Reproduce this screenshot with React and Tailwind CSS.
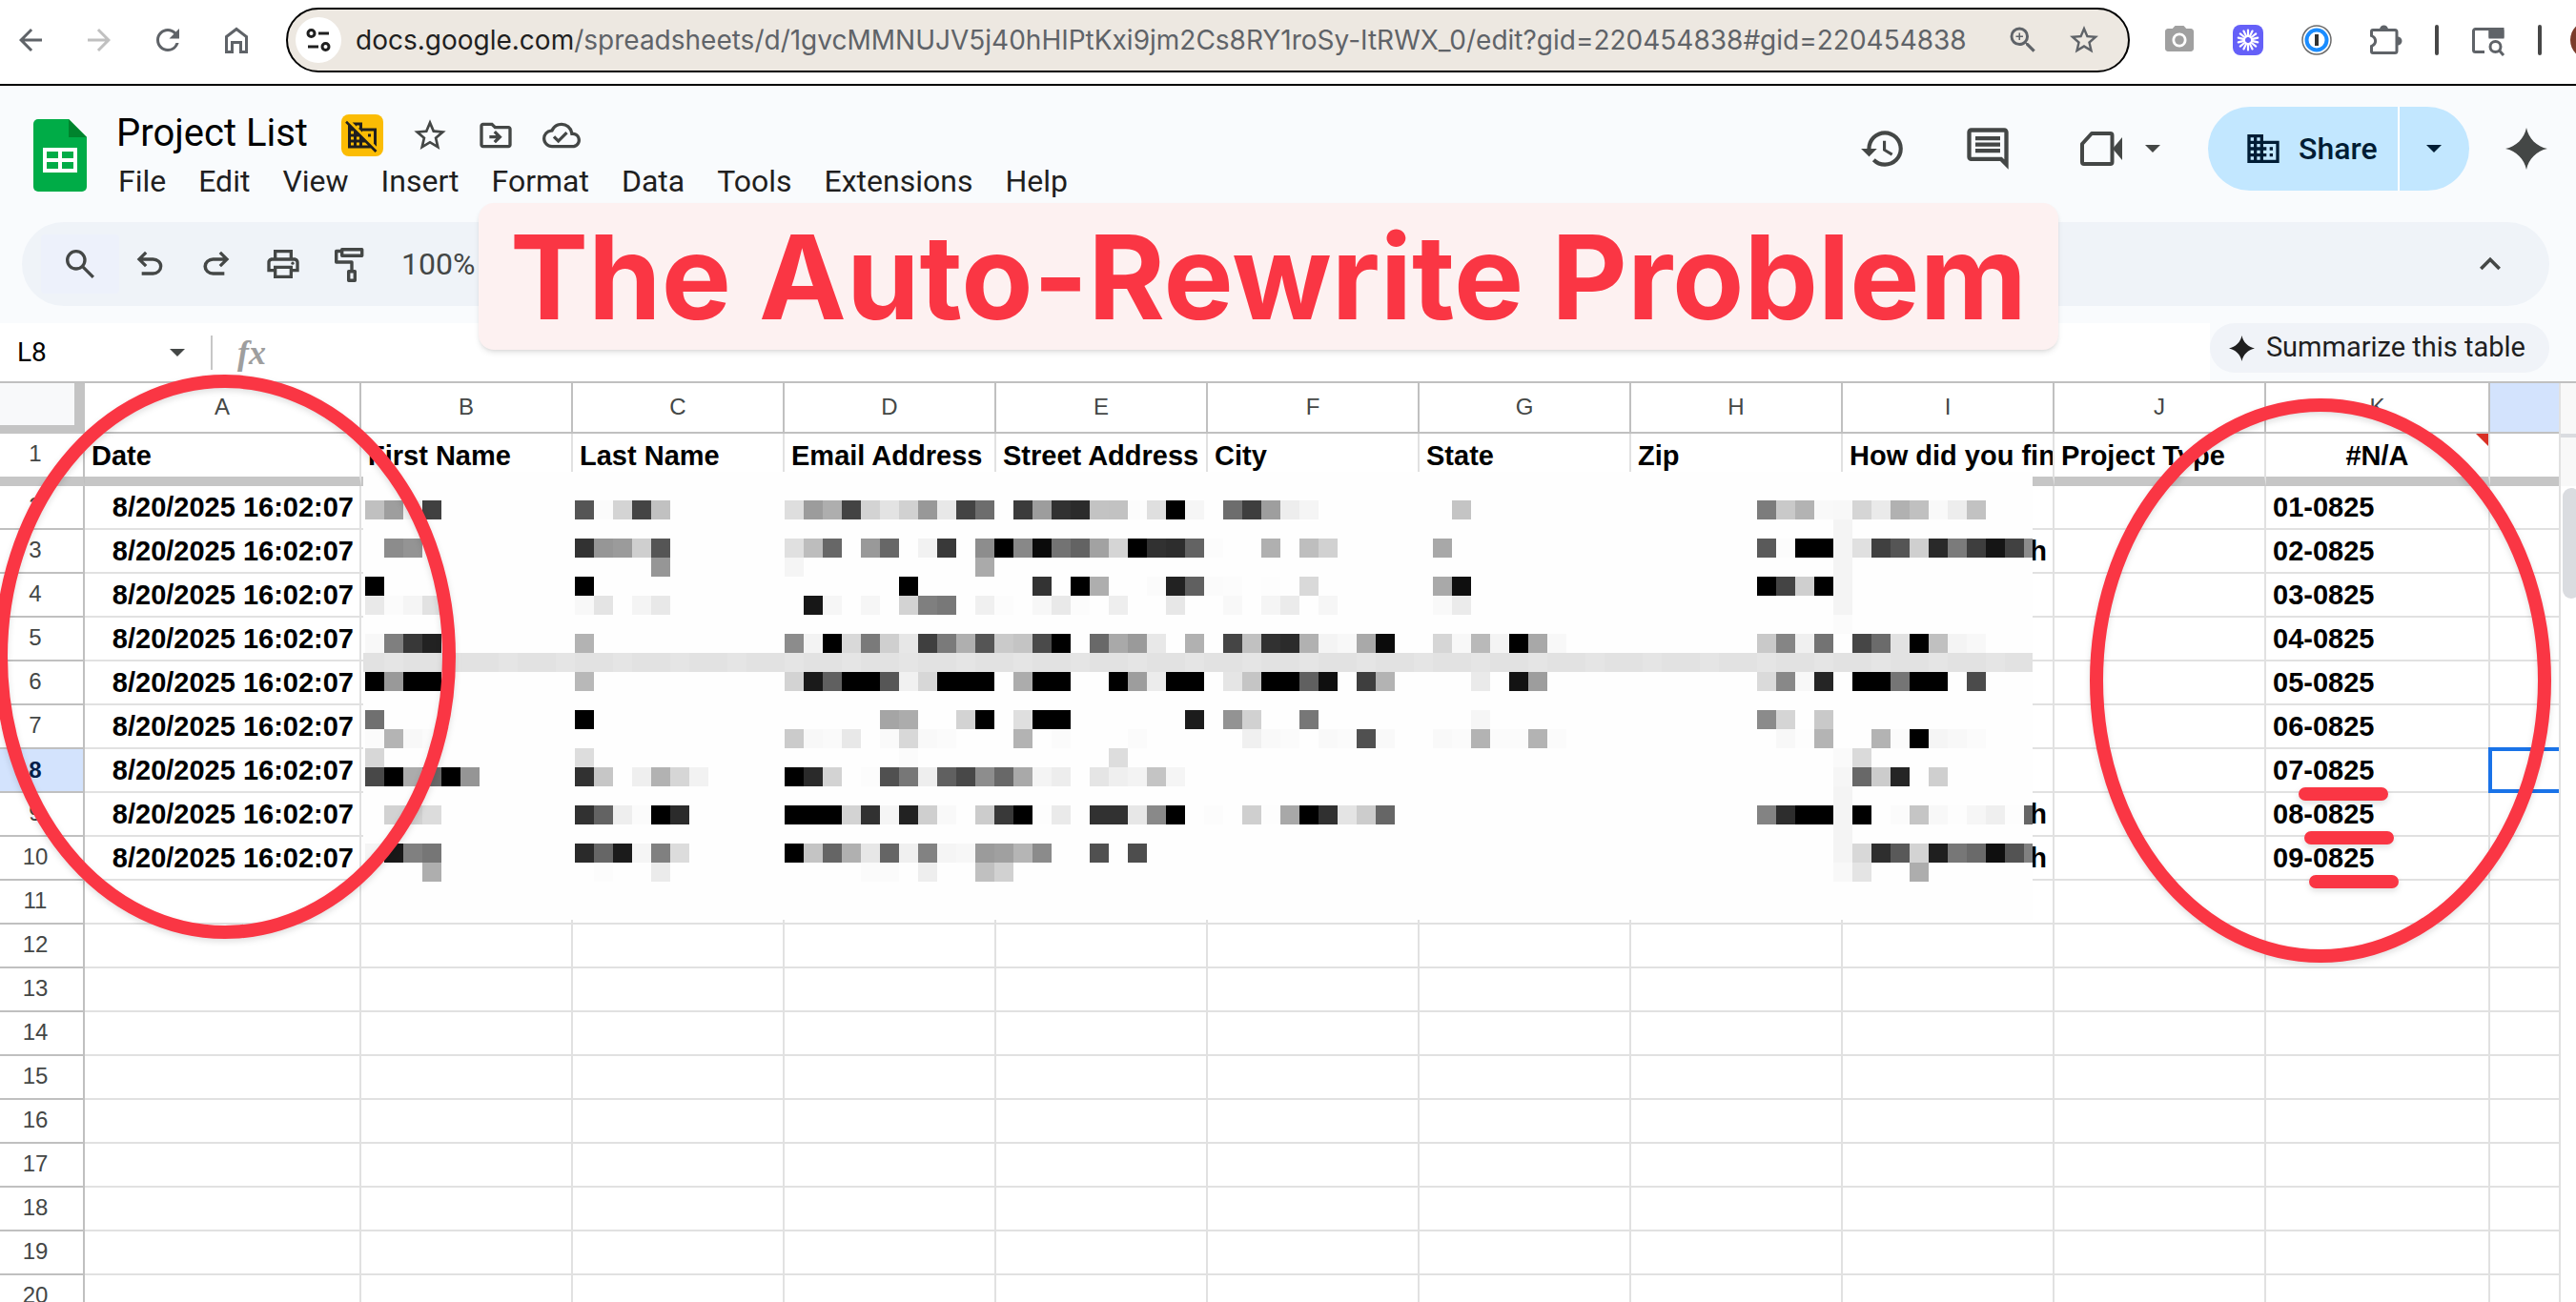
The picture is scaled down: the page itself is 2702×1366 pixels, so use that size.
import React, { useState } from "react";
import {
  MdArrowBack,
  MdArrowForward,
  MdRefresh,
  MdOutlineZoomIn,
  MdStarOutline,
  MdPhotoCamera,
  MdDomainDisabled,
  MdOutlineDriveFileMove,
  MdOutlineCloudDone,
  MdHistory,
  MdOutlineInsertComment,
  MdDomain,
  MdOutlinePrint,
  MdExpandLess,
} from "react-icons/md";

const menus = ["File", "Edit", "View", "Insert", "Format", "Data", "Tools", "Extensions", "Help"];

const letters = ["A", "B", "C", "D", "E", "F", "G", "H", "I", "J", "K", ""];

const headings = [
  "Date",
  "First Name",
  "Last Name",
  "Email Address",
  "Street Address",
  "City",
  "State",
  "Zip",
  "How did you find",
  "Project Type",
  "#N/A",
  "",
];

const projects = ["01", "02", "03", "04", "05", "06", "07", "08", "09"].map((no) => ({
  date: "8/20/2025 16:02:07",
  number: `${no}-0825`,
}));

const rowNumbers = Array.from({ length: 19 }, (_, i) => i + 2);

// Redacted block: [row, first column, two hex digits of grey for each 20px square]
const mosaic = [
  [0, 0, "c09ef440"],
  [0, 11, "55fbd444c1"],
  [0, 22, "de9cae43d3e3d198e8436dff3b9d312bc3c2fcdf00f6ff6d3e9eedf5"],
  [0, 57, "c4"],
  [0, 73, "7cc9b3f9f8d5eab1c0f9edc2"],
  [1, 77, "f4"],
  [2, 1, "8c94"],
  [2, 11, "32969bcf55"],
  [2, 22, "e0bd67ff9967fff239ff8d00880b7363a2d500312d63fcffffb0ffbed1"],
  [2, 56, "a8"],
  [2, 73, "5afc0000f4e04055cf297b3e15418c"],
  [3, 15, "96"],
  [3, 22, "f5"],
  [3, 32, "aa"],
  [3, 77, "f4"],
  [4, 0, "00"],
  [4, 11, "00"],
  [4, 28, "00"],
  [4, 35, "33ff00aefffffb2260fbfcfffdffd9"],
  [4, 56, "a90f"],
  [4, 73, "0044cf00f4"],
  [5, 0, "e9fbf5e2"],
  [5, 11, "f8e4fff4e8"],
  [5, 23, "17f6fff6ffd37f78fff0fcfff7e9fcffeeffffe7"],
  [5, 45, "f8fff5ebfff6"],
  [5, 56, "f9eb"],
  [5, 77, "f4"],
  [6, 77, "fb"],
  [7, 0, "f87f3822"],
  [7, 11, "b3"],
  [7, 22, "8cf300d97acfe73f7aaf55cac44a00ff69a99ae8ffb1ff45c1312bb1f4f8a90b"],
  [7, 56, "d6f8b9f400a8f8"],
  [7, 73, "c985f073fe466be200c0f4f8"],
  [9, 0, "00990000"],
  [9, 11, "b8"],
  [9, 22, "d31a60000056f1d7000000ffac0000ffff009dec0000ffe5c50000600fff3eb3"],
  [9, 58, "eaff139d"],
  [9, 73, "da88f825ff0000750000ff4b"],
  [11, 0, "70"],
  [11, 11, "00"],
  [11, 27, "a5acffffd300ffdf0000"],
  [11, 43, "1cff93d1ffff77"],
  [11, 58, "f6"],
  [11, 73, "8bd5ffc9"],
  [12, 0, "fbb4f8fb"],
  [12, 22, "cbf8fae8fffad8f9fb"],
  [12, 34, "b3fefb"],
  [12, 40, "fb"],
  [12, 46, "f0f9fbfff9fb50f9"],
  [12, 56, "f9fbb3fbfbb3fb"],
  [12, 74, "f8fdb4ffffb3fb00f5f8fb"],
  [13, 0, "d7"],
  [13, 11, "dd"],
  [13, 28, "fb"],
  [13, 39, "dd"],
  [13, 77, "fada"],
  [14, 0, "4800ac690095"],
  [14, 11, "31c6ffefb2d6f2"],
  [14, 22, "002ad3fffc5077ee60488d68a9f4edffe5eff3c4f5"],
  [14, 77, "f668cc25ffcf"],
  [15, 77, "f4"],
  [16, 1, "d2d2dc"],
  [16, 11, "3163eefb002b"],
  [16, 22, "000000d331f522cff9ffcc3900fdeaff3131e78900fffcffcffda80030e4cc66"],
  [16, 73, "832d0000f400fffbc5f8fdf6effd66"],
  [17, 77, "f4"],
  [18, 0, "f5198076"],
  [18, 11, "2a661bf580dc"],
  [18, 22, "00c465b0e765f082f5f79ba0b58bffff50ff4d"],
  [18, 77, "f4d82e59d31f776a0f5380"],
  [19, 3, "ae"],
  [19, 12, "fcffffeb"],
  [19, 26, "fbfbffee"],
  [19, 32, "c0d1"],
  [19, 77, "f8e4ffffad"],
];

const Mosaic = () => (
  <svg
    className="absolute left-[381px] top-[93px]"
    width="1751"
    height="470"
    viewBox="0 0 1751 470"
    shapeRendering="crispEdges"
    aria-hidden="true"
  >
    <rect width="1751" height="470" fill="#fefefe" />
    <rect y="190" width="1751" height="20" fill="#e2e2e2" />
    {Array.from({ length: 29 }, (_, i) => (
      <rect key={i} x={22 + i * 60} y="190" width="20" height="20" fill="#e5e5e5" />
    ))}
    {mosaic.map(([row, col, shades]) =>
      shades.match(/../g).map((shade, i) =>
        shade === "ff" ? null : (
          <rect
            key={`${row}-${col + i}`}
            x={2 + (col + i) * 20}
            y={30 + row * 20}
            width="20"
            height="20"
            fill={`#${shade}${shade}${shade}`}
          />
        )
      )
    )}
  </svg>
);

const HomeIcon = () => (
  <svg width="36" height="36" viewBox="0 0 36 36" fill="none" stroke="currentColor" strokeWidth="3">
    <path d="M7.5 14.5 18 6.5 28.5 14.5V30.5H22.5V20.5H13.5V30.5H7.5Z" />
  </svg>
);

const TuneIcon = () => (
  <svg width="48" height="48" viewBox="0 0 48 48" fill="none" stroke="#1f1f1f" strokeWidth="3">
    <circle cx="16.5" cy="17" r="3.5" />
    <path d="M24 17H35M13 31H24" />
    <circle cx="31.5" cy="31" r="3.5" />
  </svg>
);

const LoomIcon = () => (
  <svg width="36" height="36" viewBox="0 0 36 36">
    <rect x="2" y="2" width="32" height="32" rx="8" fill="#6560f8" />
    <g stroke="#fff" strokeWidth="2.2" strokeLinecap="round">
      {Array.from({ length: 14 }, (_, i) => (
        <path key={i} d="M18 14V7.5" transform={`rotate(${(i * 360) / 14} 18 18)`} />
      ))}
    </g>
    <circle cx="18" cy="18" r="4" fill="none" stroke="#fff" strokeWidth="1.5" />
  </svg>
);

const OnePasswordIcon = () => (
  <svg width="36" height="36" viewBox="0 0 36 36">
    <circle cx="18" cy="18" r="15" fill="#fff" stroke="#6b6b6b" strokeWidth="1.5" />
    <circle cx="18" cy="18" r="10.5" fill="#fff" stroke="#1a8cff" strokeWidth="4" />
    <rect x="16" y="12" width="4" height="12" fill="#333" />
  </svg>
);

const PuzzleIcon = () => (
  <svg width="36" height="36" viewBox="0 0 36 36">
    <path
      d="M5 7.500H28a2 2 0 0 1 2 2V29.500a2 2 0 0 1-2 2H5a1.500 1.500 0 0 1-1.500-1.500V24.500C9 22 9 16 3.500 13.500V9A1.500 1.500 0 0 1 5 7.500Z"
      fill="none"
      stroke="#5f6368"
      strokeWidth="3"
    />
    <path d="M12 7a4.500 4.500 0 0 1 9 0ZM31 14.500a4.500 4.500 0 0 1 0 9Z" fill="#5f6368" />
  </svg>
);

const TabSearchIcon = () => (
  <svg width="36" height="36" viewBox="0 0 36 36" fill="none" stroke="#5f6368" strokeWidth="3">
    <path d="M14 30.5H4.5a2 2 0 0 1-2-2V8.5a2 2 0 0 1 2-2H31a2 2 0 0 1 2 2V15H20V7" />
    <path d="M20 6.5H33V14H20Z" fill="#5f6368" />
    <circle cx="25.5" cy="25" r="5.5" />
    <path d="M29.5 29 34 34" />
  </svg>
);

const SheetsLogo = () => (
  <svg className="shrink-0" width="56" height="76" viewBox="0 0 56 76">
    <path d="M5 0H37L56 19V71a5 5 0 0 1-5 5H5a5 5 0 0 1-5-5V5a5 5 0 0 1 5-5Z" fill="#00ac47" />
    <path d="M37 0 56 19H37Z" fill="#00832d" />
    <path d="M10 30H46V56H10ZM14 34V41H26V34ZM30 34V41H42V34ZM14 45V52H26V45ZM30 45V52H42V45Z" fill="#fff" fillRule="evenodd" />
  </svg>
);

const MeetIcon = () => (
  <svg width="44" height="36" viewBox="0 0 44 36">
    <path d="M12 2H31.5a2 2 0 0 1 2 2V32a2 2 0 0 1-2 2H4a2 2 0 0 1-2-2V13Z" fill="none" stroke="#444746" strokeWidth="4" strokeLinejoin="round" />
    <path d="M34 18 44 6V30Z" fill="#444746" />
  </svg>
);

const Sparkle = ({ size }) => (
  <svg width={size} height={size} viewBox="0 0 44 44" fill="currentColor">
    <path d="M22 0C24 11 33 20 44 22C33 24 24 33 22 44C20 33 11 24 0 22C11 20 20 11 22 0Z" />
  </svg>
);

const Caret = () => (
  <svg width="16" height="8" viewBox="0 0 16 8" fill="currentColor">
    <path d="M0 0H16L8 8Z" />
  </svg>
);

const SearchIcon = () => (
  <svg width="40" height="40" viewBox="0 -960 960 960" fill="currentColor">
    <path d="M784-120 532-372q-30 24-69 38t-83 14q-109 0-184.5-75.5T120-580q0-109 75.5-184.5T380-840q109 0 184.5 75.5T640-580q0 44-14 83t-38 69l252 252-56 56ZM380-400q75 0 127.5-52.5T560-580q0-75-52.5-127.5T380-760q-75 0-127.5 52.5T200-580q0 75 52.5 127.5T380-400Z" />
  </svg>
);

const UndoIcon = () => (
  <svg width="40" height="40" viewBox="0 -960 960 960" fill="currentColor">
    <path d="M280-200v-80h284q63 0 109.5-40T720-420q0-60-46.5-100T564-560H312l104 104-56 56-200-200 200-200 56 56-104 104h252q97 0 169.5 63T800-420q0 94-72.5 157T564-200H280Z" />
  </svg>
);

const RedoIcon = () => (
  <svg width="40" height="40" viewBox="0 -960 960 960" fill="currentColor">
    <path d="M396-200q-97 0-169.5-63T154-420q0-94 72.5-157T396-640h252L544-744l56-56 200 200-200 200-56-56 104-104H396q-63 0-109.5 40T240-420q0 60 46.5 100T396-280h284v80H396Z" />
  </svg>
);

const PaintIcon = () => (
  <svg width="40" height="40" viewBox="0 0 40 40" fill="none" stroke="currentColor" strokeWidth="3.4" strokeLinejoin="round">
    <path d="M11.700 4.700H32.700V11.300H11.700ZM11 6.500H5.700V18H22V27M18.700 27.700H25.300V37.300H18.700Z" />
  </svg>
);

const BrowserBar = () => (
  <div className="flex h-[90px] shrink-0 items-center border-b-2 border-black bg-white pb-1 text-[36px] text-[#5f6368]">
    <nav className="ml-[14px] flex shrink-0 gap-9">
      <button aria-label="Back"><MdArrowBack /></button>
      <button aria-label="Forward" className="text-[#c0c0c0]"><MdArrowForward /></button>
      <button aria-label="Reload"><MdRefresh /></button>
      <button aria-label="Home"><HomeIcon /></button>
    </nav>
    <div className="ml-[34px] flex h-[68px] min-w-0 flex-1 items-center rounded-full border-2 border-black bg-[#ede8e1] pl-2">
      <button aria-label="Site information" className="shrink-0 rounded-full bg-white"><TuneIcon /></button>
      <p className="ml-[15px] min-w-0 flex-1 truncate font-[Inter,sans-serif] text-[28px] leading-9">
        <span className="text-[#1f1f1f]">docs.google.com</span>
        <span>/spreadsheets/d/1gvcMMNUJV5j40hHIPtKxi9jm2Cs8RY1roSy-ItRWX_0/edit?gid=220454838#gid=220454838</span>
      </p>
      <button aria-label="Zoom" className="mr-7"><MdOutlineZoomIn /></button>
      <button aria-label="Bookmark" className="mr-7"><MdStarOutline /></button>
    </div>
    <div className="ml-[34px] flex shrink-0 items-center gap-9">
      <button aria-label="Screenshot" className="text-[#a0a0a0]"><MdPhotoCamera /></button>
      <button aria-label="Loom"><LoomIcon /></button>
      <button aria-label="1Password"><OnePasswordIcon /></button>
      <button aria-label="Extensions"><PuzzleIcon /></button>
    </div>
    <div className="ml-[34px] flex shrink-0 items-center gap-[34px]">
      <span className="h-8 w-1 rounded-full bg-[#474747]" />
      <button aria-label="Search tabs"><TabSearchIcon /></button>
      <span className="h-8 w-1 rounded-full bg-[#474747]" />
    </div>
    <div className="ml-[30px] h-10 w-[6px] shrink-0 overflow-hidden">
      <div className="h-10 w-10 rounded-full bg-[#7a3b2a]" />
    </div>
  </div>
);

const DocHeader = () => (
  <header className="flex h-[143px] items-start pl-[35px] pr-[30px] pt-[22px] text-[#444746]">
    <div className="pt-[13px]"><SheetsLogo /></div>
    <div className="ml-[31px]">
      <div className="mt-2 flex h-11 items-center gap-[29px] text-[40px]">
        <h1 className="mr-[6px] whitespace-nowrap pb-1 leading-10 text-black">Project List</h1>
        <button aria-label="External sharing off" className="flex h-11 w-11 items-center justify-center rounded-lg bg-[#fbbc04] text-[36px] text-[#1f1f1f]">
          <MdDomainDisabled />
        </button>
        <button aria-label="Star"><MdStarOutline /></button>
        <button aria-label="Move"><MdOutlineDriveFileMove /></button>
        <button aria-label="Saved to Drive"><MdOutlineCloudDone /></button>
      </div>
      <nav className="mt-[6px] flex gap-[34px] pl-[2px] text-[32px] leading-10 text-[#1f1f1f]">
        {menus.map((menu) => (
          <button key={menu}>{menu}</button>
        ))}
      </nav>
    </div>
    <div className="ml-auto flex h-[88px] items-center">
      <button aria-label="Version history" className="text-[50px]"><MdHistory /></button>
      <button aria-label="Comments" className="ml-[59px] text-[52px]"><MdOutlineInsertComment /></button>
      <button aria-label="Meet" className="ml-[71px] flex items-center gap-6"><MeetIcon /><Caret /></button>
      <div className="ml-[50px] flex h-[88px] overflow-hidden rounded-full bg-[#c2e7ff] text-[#001d35]">
        <button className="flex w-[199px] items-center pl-[38px]">
          <MdDomain className="text-[40px]" />
          <span className="ml-[17px] text-[32px] font-medium">Share</span>
        </button>
        <button aria-label="Share options" className="flex w-[75px] items-center border-l-2 border-white pl-7">
          <Caret />
        </button>
      </div>
      <button aria-label="Gemini" className="ml-[38px]"><Sparkle size={44} /></button>
    </div>
  </header>
);

const Toolbar = () => (
  <div className="ml-[23px] mr-[28px] flex h-[88px] items-center rounded-full bg-[#eff3f8] pl-5 text-[40px] text-[#444746]">
    <button aria-label="Search the menus" className="flex h-[62px] w-[82px] items-center justify-center rounded bg-[#edf1fb]">
      <SearchIcon />
    </button>
    <div className="ml-3 flex items-center gap-[30px]">
      <button aria-label="Undo"><UndoIcon /></button>
      <button aria-label="Redo"><RedoIcon /></button>
      <button aria-label="Print"><MdOutlinePrint /></button>
      <button aria-label="Paint format"><PaintIcon /></button>
    </div>
    <button className="ml-[34px] text-[32px]">100%</button>
    <button aria-label="Hide the menus" className="ml-auto mr-10 text-[44px]"><MdExpandLess /></button>
  </div>
);

const FormulaBar = () => {
  const [cell, setCell] = useState("L8");
  const [formula, setFormula] = useState("");

  return (
    <div className="flex h-[63px] border-b-2 border-[#c0c0c0] pr-[28px]">
      <div className="flex min-w-0 flex-1 items-center bg-white pl-[18px]">
        <input
          aria-label="Name box"
          value={cell}
          onChange={(e) => setCell(e.target.value)}
          className="w-[160px] bg-transparent text-[28px] text-black outline-none"
        />
        <span className="text-[#444746]"><Caret /></span>
        <span className="ml-[27px] h-9 w-[2px] bg-[#c7c7c7]" />
        <label htmlFor="formula" className="ml-[26px] font-['Liberation_Serif',serif] text-[36px] font-bold italic leading-9 text-[#9e9e9e]">
          fx
        </label>
        <input
          id="formula"
          value={formula}
          onChange={(e) => setFormula(e.target.value)}
          className="min-w-0 flex-1 bg-transparent px-6 text-[28px] outline-none"
        />
      </div>
      <button className="flex h-[52px] shrink-0 items-center gap-3 rounded-full bg-[#f0f3f8] pl-[20px] pr-[25px] text-[29px] text-[#1f1f1f]">
        <Sparkle size={27} />
        Summarize this table
      </button>
    </div>
  );
};

const Sheet = () => (
  <table className="w-full table-fixed border-separate border-spacing-0 font-['Liberation_Sans',Arial,sans-serif] text-[29px] leading-8 font-bold text-black">
    <colgroup>
      <col className="w-[89px]" />
      <col className="w-[290px]" />
      {headings.slice(1, 10).map((h) => (
        <col key={h} className="w-[222px]" />
      ))}
      <col className="w-[235px]" />
      <col />
    </colgroup>
    <thead>
      <tr className="h-[53px] text-[24px] text-[#444746]">
        <td className="border-b-[9px] border-r-[11px] border-[#c4c4c4] bg-[#f8f9fa] p-0" />
        {letters.map((letter, i) => (
          <th
            key={i}
            scope="col"
            className={
              i === 11
                ? "border-b-2 border-[#c0c0c0] bg-[#d3e3fd] p-0"
                : "border-b-2 border-r-2 border-[#c0c0c0] p-0 pb-[2px] font-normal"
            }
          >
            {letter}
          </th>
        ))}
      </tr>
      <tr className="h-[55px]">
        <th scope="row" className="border-b-[10px] border-r-2 border-b-[#c6c6c6] border-r-[#c0c0c0] p-0 pb-1 pr-[13px] text-[24px] font-normal text-[#444746]">
          1
        </th>
        {headings.map((heading, i) => (
          <th
            key={i}
            scope="col"
            className={
              i === 11
                ? "border-b-[10px] border-[#c6c6c6] p-0"
                : i === 10
                ? "relative border-b-[10px] border-r-2 border-b-[#c6c6c6] border-r-[#e1e1e1] p-0 text-center"
                : "overflow-hidden whitespace-nowrap border-b-[10px] border-r-2 border-b-[#c6c6c6] border-r-[#e1e1e1] p-0 pl-[7px] text-left"
            }
          >
            {heading}
            {i === 10 && (
              <svg className="absolute right-0 top-0" width="13" height="13" viewBox="0 0 13 13">
                <path d="M0 0H13V13Z" fill="#d93025" />
              </svg>
            )}
          </th>
        ))}
      </tr>
    </thead>
    <tbody>
      {rowNumbers.map((n) => {
        const project = projects[n - 2];
        return (
          <tr key={n} className="h-[46px]">
            <th
              scope="row"
              className={
                n === 8
                  ? "border-b-2 border-r-2 border-[#c0c0c0] bg-[#d3e3fd] p-0 pr-[13px] text-[24px] text-[#041e49]"
                  : "border-b-2 border-r-2 border-[#c0c0c0] p-0 pb-[2px] pr-[13px] text-[24px] font-normal text-[#444746]"
              }
            >
              {n}
            </th>
            {letters.map((letter, i) => (
              <td
                key={i}
                className={
                  i === 11
                    ? "border-b-2 border-[#e1e1e1] p-0"
                    : i === 10
                    ? "border-b-2 border-r-2 border-[#e1e1e1] p-0 pl-[7px]"
                    : "border-b-2 border-r-2 border-[#e1e1e1] p-0 pr-[6px] text-right"
                }
              >
                {i === 0 && project?.date}
                {i === 8 && [3, 9, 10].includes(n) && "h"}
                {i === 10 && project?.number}
                {i === 11 && n === 8 && (
                  <div className="-my-[2px] -ml-[2px] h-[48px] border-y-4 border-l-4 border-[#1a73e8]" />
                )}
              </td>
            ))}
          </tr>
        );
      })}
    </tbody>
  </table>
);

// Hand-drawn marks over the sheet
const Annotations = () => (
  <svg
    className="pointer-events-none absolute -top-[12px] left-0 overflow-visible drop-shadow-md"
    width="2702"
    height="640"
    viewBox="0 0 2702 640"
    fill="none"
    stroke="#fa3644"
    strokeWidth="14"
    strokeLinecap="round"
    aria-hidden="true"
  >
    <ellipse cx="236" cy="299" rx="235" ry="289" />
    <ellipse cx="2434" cy="324" rx="235" ry="289" />
    <path d="M2418 443H2498M2424 489H2504M2429 535H2509" />
  </svg>
);

const App = () => {
  return (
    <div className="relative flex h-screen flex-col overflow-hidden bg-white font-[Roboto,sans-serif]">
      <BrowserBar />
      <div className="shrink-0 bg-[#f9fbfd]">
        <DocHeader />
        <Toolbar />
        <div className="h-[18px]" />
        <FormulaBar />
      </div>
      <main className="relative flex shrink-0">
        <div className="min-w-0 flex-1">
          <Sheet />
        </div>
        <div className="w-[18px] shrink-0 overflow-hidden border-l-2 border-[#e1e1e1]">
          <div className="h-[57px] border-b-4 border-[#dadce0] bg-[#f8f8f8]" />
          <div className="h-[51px] bg-[#f8f8f8]" />
          <div className="ml-[2px] mt-[2px] h-[116px] w-[18px] rounded-full bg-[#dadce0]" />
        </div>
        <Mosaic />
        <Annotations />
      </main>
      <div className="absolute left-[502px] top-[213px] whitespace-nowrap rounded-2xl bg-[#fdf1f1] px-[33px] pt-[2px] font-[Inter,sans-serif] text-[123px] font-bold leading-[152px] text-[#fa3644] shadow-md">
        The Auto-Rewrite Problem
      </div>
    </div>
  );
};

export default App;
